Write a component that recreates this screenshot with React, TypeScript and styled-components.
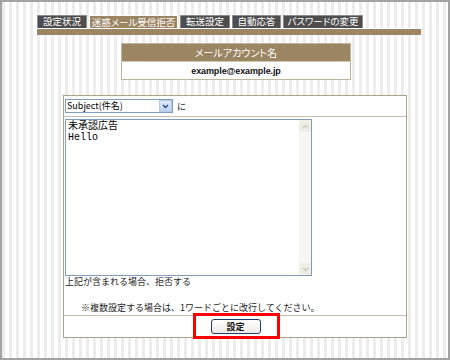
import React from 'react';
import styled, { createGlobalStyle } from 'styled-components';

const GlobalStyle = createGlobalStyle`
  html, body {
    margin: 0;
    padding: 0;
    background: #ffffff;
  }
`;

const BROWN = '#9b8562';

const Frame = styled.div`
  width: 450px;
  height: 360px;
  box-sizing: border-box;
  border: 2px solid #a3a3a3;
  background: repeating-linear-gradient(
    90deg,
    #ededed 0px,
    #ededed 3px,
    #ffffff 3px,
    #ffffff 7px
  );
  display: flex;
  flex-direction: column;
  font-family: 'Noto Sans CJK JP', 'Liberation Sans', sans-serif;
  font-size: 9px;
  color: #222;
`;

const TabNav = styled.div`
  margin: 13px 27px 0 35px;
  display: flex;
  flex-direction: column;
`;

const TabRow = styled.div`
  display: flex;
  gap: 2px;
  height: 14px;
`;

const Tab = styled.div<{ $active?: boolean; $w: number }>`
  width: ${(p) => p.$w}px;
  box-sizing: border-box;
  display: flex;
  align-items: center;
  justify-content: center;
  color: #ffffff;
  font-size: 9.5px;
  font-feature-settings: 'palt';
  line-height: 1;
  white-space: nowrap;
  background: ${(p) => (p.$active ? BROWN : '#4e4e4e')};
  border: 1px solid ${(p) => (p.$active ? '#ffffff' : '#8c8c8c')};
  border-bottom: ${(p) => (p.$active ? 'none' : '1px solid #8c8c8c')};
`;

const TabBar = styled.div`
  height: 7px;
  background: ${BROWN};
  border-top: 1px solid #ffffff;
  box-sizing: border-box;
  margin-top: -1px;
`;

const AccountBox = styled.div`
  margin: 8px 0 0 119px;
  width: 230px;
  box-sizing: border-box;
  border: 1px solid #bdb49b;
  background: #ffffff;
`;

const AccountHead = styled.div`
  height: 17px;
  background: ${BROWN};
  border-bottom: 1px solid #cfc7b0;
  color: #ffffff;
  font-size: 10px;
  font-feature-settings: 'palt';
  display: flex;
  align-items: center;
  justify-content: center;
`;

const AccountRow = styled.div`
  height: 17px;
  display: flex;
  align-items: center;
  justify-content: center;
  color: #111;
  font-family: 'Liberation Sans', 'Noto Sans CJK JP', sans-serif;
  font-size: 9px;
  font-weight: bold;
  letter-spacing: -0.1px;
`;

const FormBox = styled.div`
  margin: 15px 0 0 61px;
  width: 344px;
  box-sizing: border-box;
  border: 1px solid #a8a189;
  background: #ffffff;
  display: flex;
  flex-direction: column;
`;

const Section = styled.div<{ $h?: number; $center?: boolean }>`
  ${(p) => (p.$h ? `height: ${p.$h}px;` : '')}
  display: flex;
  align-items: center;
  justify-content: ${(p) => (p.$center ? 'center' : 'flex-start')};
  border-bottom: 1px solid #c4bfae;
  padding-left: 1px;
  &:last-child {
    border-bottom: none;
  }
`;

const BodySection = styled.div`
  display: flex;
  flex-direction: column;
  padding: 2px 1px 1px 1px;
  border-bottom: 1px solid #c4bfae;
`;

const SelectWrap = styled.div`
  width: 108px;
  height: 14px;
  box-sizing: border-box;
  border: 1px solid #7f9db9;
  display: flex;
  background: #ffffff;
`;

const Select = styled.select`
  appearance: none;
  flex: 1;
  border: none;
  outline: none;
  padding: 0 0 0 1px;
  margin: 0;
  background: transparent;
  font-family: 'Noto Sans CJK JP', sans-serif;
  font-size: 9px;
  color: #000;
  height: 12px;
  line-height: 12px;
`;

const SelectArrow = styled.div`
  width: 13px;
  height: 12px;
  box-sizing: border-box;
  border: 1px solid #b7cbe8;
  background: linear-gradient(#dfe9f8, #bcd0ef);
  display: flex;
  align-items: center;
  justify-content: center;
`;

const Particle = styled.span`
  margin-left: 4px;
`;

const TextBox = styled.div`
  width: 247px;
  height: 157px;
  box-sizing: border-box;
  border: 1px solid #7f9db9;
  display: flex;
  background: #ffffff;
`;

const TextArea = styled.textarea`
  flex: 1;
  border: none;
  outline: none;
  resize: none;
  overflow: hidden;
  padding: 1px 2px;
  margin: 0;
  font-family: 'Liberation Mono', 'Noto Sans CJK JP', monospace;
  font-size: 10px;
  line-height: 11px;
  color: #000;
`;

const ScrollTrack = styled.div`
  width: 12px;
  background: #f7f6f1;
  display: flex;
  flex-direction: column;
  justify-content: space-between;
`;

const ScrollBtn = styled.div`
  height: 12px;
  box-sizing: border-box;
  border: 1px solid #f0efe8;
  background: #eeede6;
  display: flex;
  align-items: center;
  justify-content: center;
`;

const Caption = styled.div`
  height: 12px;
  line-height: 12px;
`;

const Note = styled.div`
  height: 12px;
  line-height: 12px;
  margin-top: 14px;
  padding-left: 16px;
`;

const ButtonWrap = styled.div`
  position: relative;
  display: flex;
`;

const SubmitButton = styled.button`
  width: 50px;
  height: 15px;
  box-sizing: border-box;
  border: 1px solid #1f3f6e;
  border-radius: 3px;
  background: linear-gradient(#ffffff, #ecebe6);
  font-family: 'Noto Sans CJK JP', sans-serif;
  font-size: 9px;
  font-weight: bold;
  color: #111;
  padding: 0;
  display: flex;
  align-items: center;
  justify-content: center;
`;

const Highlight = styled.span`
  position: absolute;
  top: -6px;
  bottom: -5px;
  left: -18px;
  right: -19px;
  border: 3px solid #ff0000;
  pointer-events: none;
`;

const tabs = [
  { label: '設定状況', w: 50 },
  { label: '迷惑メール受信拒否', w: 89, active: true },
  { label: '転送設定', w: 50 },
  { label: '自動応答', w: 49 },
  { label: 'パスワードの変更', w: 80 },
];

const Chevron = ({ up, color }: { up?: boolean; color: string }) => (
  <svg width="7" height="5" viewBox="0 0 7 5">
    <path
      d={up ? 'M1 4 L3.5 1.5 L6 4' : 'M1 1 L3.5 3.5 L6 1'}
      fill="none"
      stroke={color}
      strokeWidth="1.4"
    />
  </svg>
);

const App = () => {
  return (
    <Frame>
      <GlobalStyle />
      <TabNav>
        <TabRow>
          {tabs.map((t) => (
            <Tab key={t.label} $w={t.w} $active={t.active}>
              {t.label}
            </Tab>
          ))}
        </TabRow>
        <TabBar />
      </TabNav>

      <AccountBox>
        <AccountHead>メールアカウント名</AccountHead>
        <AccountRow>example@example.jp</AccountRow>
      </AccountBox>

      <FormBox>
        <Section $h={20}>
          <SelectWrap>
            <Select defaultValue="subject">
              <option value="subject">Subject(件名)</option>
              <option value="from">From(差出人)</option>
            </Select>
            <SelectArrow>
              <Chevron color="#2b4b8c" />
            </SelectArrow>
          </SelectWrap>
          <Particle>に</Particle>
        </Section>
        <BodySection>
          <TextBox>
            <TextArea defaultValue={'未承認広告\nHello'} />
            <ScrollTrack>
              <ScrollBtn>
                <Chevron up color="#c9c8bd" />
              </ScrollBtn>
              <ScrollBtn>
                <Chevron color="#c9c8bd" />
              </ScrollBtn>
            </ScrollTrack>
          </TextBox>
          <Caption>上記が含まれる場合、拒否する</Caption>
          <Note>※複数設定する場合は、1ワードごとに改行してください。</Note>
        </BodySection>
        <Section $h={21} $center>
          <ButtonWrap>
            <SubmitButton type="button">設定</SubmitButton>
            <Highlight />
          </ButtonWrap>
        </Section>
      </FormBox>
    </Frame>
  );
};

export default App;
